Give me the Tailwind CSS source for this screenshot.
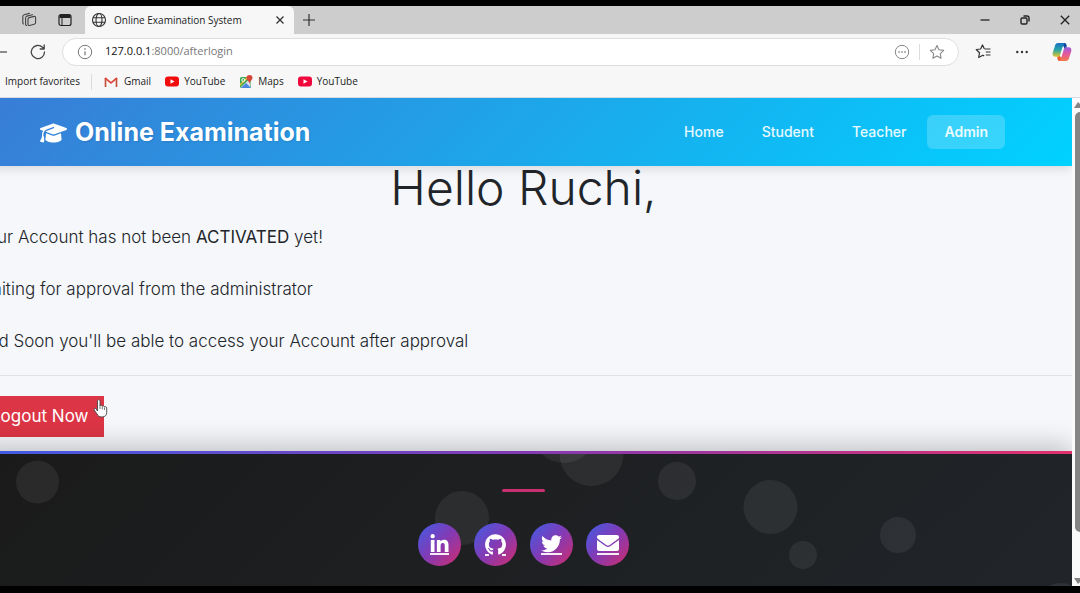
<!DOCTYPE html>
<html lang="en">
<head>
<meta charset="utf-8">
<meta name="viewport" content="width=device-width, initial-scale=1">
<title>Online Examination System</title>
<script src="https://cdn.jsdelivr.net/npm/@tailwindcss/browser@4"></script>
</head>
<body class="flex h-screen flex-col overflow-hidden bg-black pt-[6px] pb-[7px] font-['Inter',sans-serif]">

<!-- Browser window -->
<header class="shrink-0 bg-[#f7f7f7] font-['Open_Sans','Noto_Sans',sans-serif] text-[10px] text-[#222]">
  <!-- Tab strip -->
  <div class="flex h-7 items-stretch bg-[#cdcdcd]">
    <div class="flex w-[85px] items-center gap-5 pl-[21px]">
      <button type="button" aria-label="Workspaces">
        <svg class="size-4" viewBox="0 0 16 16" fill="none" stroke="#444" stroke-width="1.100" stroke-linejoin="round" stroke-linecap="round"><path d="M8.300 5.600l4.800-1.200c.9-.2 1.500.3 1.500 1.200v4.900c0 1-.5 1.600-1.400 1.800l-4.700 1.200c-.9.2-1.500-.3-1.500-1.200V7.400c0-1 .4-1.600 1.300-1.800z"/><path d="M4.600 12.300V6c0-1 .5-1.600 1.400-1.900l5.500-1.400M1.800 10.800V4.600c0-1 .5-1.600 1.400-1.900l5.200-1.300M4.600 12.300c0 .7.300 1.100.9 1.300M1.800 10.800c0 .6.300 1 .8 1.200"/></svg>
      </button>
      <button type="button" aria-label="Tab actions">
        <svg class="size-4" viewBox="0 0 16 16" fill="none" stroke="#222" stroke-width="1.200"><rect x="2" y="2.500" width="12" height="11" rx="2"/><path d="M2.500 4.500h11" stroke-width="3"/><path d="M5 5v8" stroke-width="1"/></svg>
      </button>
    </div>
    <div class="flex w-[209px] items-center rounded-t-md bg-[#f7f7f7] pr-2 pl-[6px]">
      <svg class="size-4" viewBox="0 0 16 16" fill="none" stroke="#333" stroke-width="1.100"><circle cx="8" cy="8" r="6.500"/><ellipse cx="8" cy="8" rx="3" ry="6.500"/><path d="M2 5.700h12M2 10.300h12"/></svg>
      <span class="ml-[7px] grow whitespace-nowrap">Online Examination System</span>
      <button type="button" aria-label="Close tab">
        <svg class="size-3" viewBox="0 0 12 12" stroke="#333" stroke-width="1.300"><path d="M2.500 2.500l7 7m0-7l-7 7"/></svg>
      </button>
    </div>
    <button type="button" aria-label="New tab" class="ml-2">
      <svg class="size-[14px]" viewBox="0 0 14 14" stroke="#333" stroke-width="1.200"><path d="M7 1v12M1 7h12"/></svg>
    </button>
    <div class="ml-auto flex items-center gap-[26px] pr-2">
      <button type="button" aria-label="Minimize"><svg class="size-[14px]" viewBox="0 0 14 14" stroke="#222" stroke-width="1.300"><path d="M2.500 7h9"/></svg></button>
      <button type="button" aria-label="Restore"><svg class="size-[14px]" viewBox="0 0 14 14" fill="none" stroke="#222" stroke-width="1.400"><rect x="3" y="5" width="6" height="6" rx="1.200"/><path d="M5.500 3h3.500a2 2 0 0 1 2 2v3.500"/></svg></button>
      <button type="button" aria-label="Close"><svg class="size-[14px]" viewBox="0 0 14 14" stroke="#222" stroke-width="1.300"><path d="M2.800 2.800l8.400 8.400m0-8.400l-8.400 8.400"/></svg></button>
    </div>
  </div>

  <!-- Address row -->
  <div class="flex h-[35px] items-center">
    <button type="button" aria-label="Back" class="w-7"><svg class="h-4 w-[7px]" viewBox="0 0 7 16" stroke="#444" stroke-width="1.200"><path d="M0 8h7"/></svg></button>
    <button type="button" aria-label="Refresh">
      <svg class="size-5" viewBox="0 0 20 20" fill="none" stroke="#444" stroke-width="1.300" stroke-linecap="round" stroke-linejoin="round"><path d="M16.500 10A6.600 6.600 0 1 1 14.500 5.300L16 6.800M16.200 3v4h-4"/></svg>
    </button>
    <div class="ml-[14px] flex h-[28px] grow items-center rounded-full border border-[#dedede] bg-white pr-[13px] pl-[14px]">
      <svg class="size-4" viewBox="0 0 16 16" fill="none" stroke="#777" stroke-width="1"><circle cx="8" cy="8" r="6.700"/><path d="M8 7.200v4" stroke-width="1.200"/><circle cx="8" cy="5" r=".4"/></svg>
      <span class="ml-3 grow text-[11px] text-[#777]"><span class="text-[#111]">127.0.0.1</span>:8000/afterlogin</span>
      <button type="button" aria-label="More page actions"><svg class="size-4" viewBox="0 0 16 16" fill="none" stroke="#888"><circle cx="8" cy="8" r="6.700"/><path d="M4.300 8h1.500m1.500 0h1.500m1.500 0h1.500" stroke-width="1.500"/></svg></button>
      <span class="mx-[9px] h-4 w-px bg-[#dcdcdc]"></span>
      <button type="button" aria-label="Add to favorites"><svg class="size-4" viewBox="0 0 16 16" fill="none" stroke="#888" stroke-width="1.100" stroke-linejoin="round"><path d="M8 1.500l2 4.300 4.700.6-3.400 3.200.8 4.700L8 12l-4.100 2.300.8-4.700L1.300 6.400 6 5.800z"/></svg></button>
    </div>
    <div class="ml-4 flex items-center gap-[22px] pr-2">
      <button type="button" aria-label="Favorites"><svg class="size-[17px]" viewBox="0 0 17 17" fill="none" stroke="#333" stroke-width="1.200" stroke-linejoin="round"><path d="M9.500 6h6M10.800 9h4.700M10.800 12h4.700M9.300 5.800L7.500 1.900 5.600 6 1.200 6.500l3.300 3.200-.8 4.800 4.100-2.300 1.400.7"/></svg></button>
      <button type="button" aria-label="Settings and more"><svg class="size-4" viewBox="0 0 16 16" fill="#333"><circle cx="3.300" cy="8" r="1.200"/><circle cx="8" cy="8" r="1.200"/><circle cx="12.700" cy="8" r="1.200"/></svg></button>
      <button type="button" aria-label="Copilot">
        <svg class="size-5" viewBox="0 0 20 20">
          <defs>
            <linearGradient id="cpA" x1="0" y1="0" x2="0" y2="1"><stop offset="0" stop-color="#1b6fc4"/><stop offset=".5" stop-color="#27a6a6"/><stop offset="1" stop-color="#e8c62c"/></linearGradient>
            <linearGradient id="cpB" x1="0" y1="0" x2="0" y2="1"><stop offset="0" stop-color="#9a5be0"/><stop offset=".5" stop-color="#e4589c"/><stop offset="1" stop-color="#f47a45"/></linearGradient>
          </defs>
          <path d="M12.300 1H6.300C4 1 3.200 2.600 2.600 5L.8 10.500C0 13 1.200 14.800 3.500 14.800h2.700c1 0 1.500-.6 1.800-1.600l2.300-7.500c.4-1.200 1-1.700 2-1.700h2.500L14 2c-.4-.7-.9-1-1.700-1z" fill="url(#cpA)"/>
          <path d="M7.700 19h6c2.300 0 3.100-1.600 3.700-4l1.800-5.500c.8-2.500-.4-4.300-2.700-4.300h-2.700c-1 0-1.500.6-1.800 1.600l-2.300 7.500c-.4 1.200-1 1.700-2 1.700H5.200L6 18c.4.700.9 1 1.700 1z" fill="url(#cpB)"/>
          <path d="M12.300 1c1.700 0 2 1.500 2.500 4.200-1.300 0-2 .4-2.500 1.600L11.500 4z" fill="#17479e"/>
          <path d="M7.700 19c-1.700 0-2-1.500-2.500-4.200 1.300 0 2-.3 2.600-1.300L9 16z" fill="#e9622e"/>
        </svg>
      </button>
    </div>
  </div>

  <!-- Favorites bar -->
  <nav class="flex h-[29px] items-center border-b border-[#d5dbe0] pb-[3px] pl-[5px]" aria-label="Favorites">
    <a href="#" class="w-[74px] whitespace-nowrap">Import favorites</a>
    <span class="mx-3 h-4 w-px bg-[#dcdcdc]"></span>
    <div class="flex items-center gap-[14px] whitespace-nowrap">
      <a href="#" class="flex items-center gap-[6px]"><svg class="h-3 w-[14px]" viewBox="0 0 14 12"><path d="M1.500 11V2" stroke="#c5523f" stroke-width="1.700"/><path d="M12.500 11V2" stroke="#c5523f" stroke-width="1.700"/><path d="M1 2l6 5 6-5" fill="none" stroke="#dd4b3e" stroke-width="1.700"/></svg>Gmail</a>
      <a href="#" class="flex items-center gap-[5px]"><svg class="h-[11px] w-[14px]" viewBox="0 0 14 11"><rect y=".5" width="14" height="10" rx="3" fill="#f20d0d"/><path d="M5.500 3.300v4.400l4-2.200z" fill="#fff"/></svg>YouTube</a>
      <a href="#" class="flex items-center gap-[5px]"><svg class="size-[14px]" viewBox="0 0 14 14"><rect x="1" y="2" width="11" height="11" rx="1.500" fill="#3aa757"/><path d="M1.500 12.500L11.500 3v9.500z" fill="#d9dde2"/><path d="M2 13l5-5 5 5z" fill="#4a86e0"/><path d="M1 11l9-9h-2L1 9z" fill="#f1c232"/><path d="M10.500 0a3 3 0 0 1 3 3c0 2-2.500 3-3 5.500-.5-2.500-3-3.500-3-5.500a3 3 0 0 1 3-3z" fill="#d9453a"/><circle cx="4.300" cy="5" r="1.500" fill="none" stroke="#fff"/></svg>Maps</a>
      <a href="#" class="flex items-center gap-[5px]"><svg class="h-[11px] w-[14px]" viewBox="0 0 14 11"><rect y=".5" width="14" height="10" rx="3" fill="#f0083c"/><path d="M5.500 3.300v4.400l4-2.200z" fill="#fff"/></svg>YouTube</a>
    </div>
  </nav>
</header>

<div class="flex min-h-0 grow bg-[#f5f7fb]">
  <div class="min-w-0 grow overflow-hidden">
    <!-- Page content is scrolled slightly to the right -->
    <div class="-ml-[25px] flex h-full flex-col">
      <nav class="z-10 flex h-[68px] shrink-0 items-center justify-between bg-linear-135/srgb from-[#3a7bd5] to-[#00d2ff] pr-[67px] pl-[65px] text-white shadow-[0_3px_10px_rgba(0,0,0,0.12)]">
        <a href="#" class="flex items-center gap-2 pt-px text-[25px] font-bold text-shadow-[1px_1px_2px_rgba(0,0,0,0.1)]">
          <svg class="h-[22px] w-[27px]" viewBox="0 0 640 512" fill="#fff"><path d="M320 32c-8.100 0-16.100 1.400-23.700 4.100L15.800 137.400C6.300 140.900 0 149.900 0 160s6.300 19.100 15.800 22.600l57.900 20.900C57.300 229.300 48 259.800 48 291.900v28.100c0 28.400-10.800 57.700-22.300 80.800c-6.500 13-13.900 25.800-22.500 37.600C0 442.700-.9 448.300 .9 453.400s6 8.900 11.200 10.200l64 16c4.200 1.100 8.700 .3 12.400-2s6.300-6.100 7.100-10.400c8.600-42.800 4.300-81.200-2.100-108.700C90.300 344.300 86 329.800 80 316.500V291.900c0-30.200 10.200-58.700 27.900-81.500c12.900-15.500 29.600-28 49.200-35.700l157-61.700c8.200-3.200 17.500 .8 20.700 9s-.8 17.500-9 20.700l-157 61.700c-12.400 4.900-23.300 12.400-32.200 21.600l159.600 57.600c7.600 2.700 15.600 4.100 23.700 4.100s16.100-1.400 23.700-4.100L624.200 182.600c9.500-3.400 15.800-12.500 15.800-22.600s-6.300-19.100-15.800-22.600L343.700 36.100C336.100 33.400 328.100 32 320 32zM128 408c0 35.300 86 72 192 72s192-36.700 192-72L496.700 262.600 354.500 314c-11.100 4-22.800 6-34.500 6s-23.500-2-34.500-6L143.300 262.600 128 408z"/></svg>
          Online Examination
        </a>
        <div class="flex items-center gap-1 text-sm font-medium text-white/90">
          <a href="#" class="rounded-md px-[17px] py-2">Home</a>
          <a href="#" class="rounded-md px-[17px] py-2">Student</a>
          <a href="#" class="rounded-md px-[17px] py-2">Teacher</a>
          <a href="#" class="rounded-md bg-white/20 px-[17px] py-[7px] font-semibold">Admin</a>
        </div>
      </nav>

      <main class="flex h-[285px] shrink-0 flex-col text-[#212529]">
        <h1 class="text-center text-5xl leading-[44px] font-light">Hello Ruchi,</h1>
        <div class="flex flex-col gap-6 pt-[13px] pl-[2px] text-[17px] leading-7 font-light">
          <p>Your Account has not been <span class="font-normal">ACTIVATED</span> yet!</p>
          <p>Waiting for approval from the administrator</p>
          <p>And Soon you'll be able to access your Account after approval</p>
        </div>
        <hr class="mt-5 border-[#dfe1e5]">
        <div class="relative mt-5 flex">
          <button type="button" class="h-[41px] bg-[#dc3545] px-4 text-[17px] text-white">Logout Now</button>
          <!-- Pointer over the button -->
          <svg class="absolute left-[118px] top-[2px] h-5 w-[15px]" viewBox="0 0 15 20"><path d="M4.500 13V3.200c0-2 2.500-2 2.500 0V8c.3-1 2.200-.9 2.300.4.500-.9 2.100-.7 2.200.6.600-.7 2.200-.4 2.200 1v4.500c0 2.500-1.500 4.500-4.700 4.500-3 0-4-1.300-5-3L1.200 12c-.7-1.400.8-2.300 1.800-1.200z" fill="#fff" stroke="#444" stroke-width=".9" stroke-linejoin="round"/><path d="M7 8v3M9.300 9v2.500M11.500 9.500V12" stroke="#555" stroke-width=".8"/></svg>
        </div>
      </main>

      <footer class="relative flex grow flex-col items-center bg-linear-135/srgb from-[#1a1a1a] to-[#212529] shadow-[0_-6px_24px_rgba(0,0,0,0.22)]">
        <div class="h-[3px] w-full shrink-0 bg-linear-to-r/srgb from-[#405de6] via-[#833ab4] to-[#e1306c]"></div>
        <!-- Floating bubbles -->
        <svg class="absolute inset-0 size-full" fill="#fff" fill-opacity=".065">
          <svg y="3" width="100%" height="100%">
            <circle cx="62.500" cy="28" r="21.500"/><circle cx="487" cy="64" r="27"/><circle cx="589" cy="-23" r="32"/><circle cx="616.500" cy="0" r="32"/><circle cx="702" cy="27" r="19"/><circle cx="795.500" cy="53" r="27"/><circle cx="828" cy="101" r="14"/><circle cx="923" cy="81" r="18"/><circle cx="1086" cy="154" r="25"/>
          </svg>
        </svg>
        <div class="mt-[35px] h-[3px] w-[43px] shrink-0 rounded-full bg-[#c9306f]"></div>
        <div class="relative mt-[31px] flex gap-[13px]">
          <a href="#" aria-label="LinkedIn" class="flex size-[43px] flex-col items-center justify-center gap-px rounded-full bg-linear-135/srgb from-[#405de6] via-[#833ab4] to-[#d12c6c]">
            <svg class="h-[18px] w-[19px]" viewBox="0 0 448 448" fill="#fff"><path d="M100.280 448H7.400V148.900h92.880zM53.790 108.100C24.090 108.100 0 83.500 0 53.800a53.790 53.790 0 0 1 107.580 0c0 29.700-24.100 54.300-53.790 54.300zM447.900 448h-92.680V302.400c0-34.700-.7-79.200-48.290-79.200-48.290 0-55.690 37.700-55.690 76.700V448h-92.780V148.900h89.080v40.800h1.300c12.400-23.500 42.690-48.300 87.880-48.300 94 0 111.280 61.900 111.280 142.300V448z"/></svg>
            <span class="h-[2px] w-[19px] bg-white/90"></span>
          </a>
          <a href="#" aria-label="GitHub" class="flex size-[43px] flex-col items-center justify-center rounded-full bg-linear-135/srgb from-[#405de6] via-[#833ab4] to-[#d12c6c]">
            <svg class="-mb-px h-[21px] w-[21px]" viewBox="0 0 496 500" fill="#fff"><path d="M244.800 8C106.100 8 0 113.300 0 252c0 110.900 69.800 205.800 169.500 239.200 12.800 2.300 17.300-5.600 17.300-12.100 0-6.200-.3-40.400-.3-61.400 0 0-70 15-84.700-29.800 0 0-11.400-29.100-27.800-36.600 0 0-22.900-15.700 1.600-15.400 0 0 24.900 2 38.600 25.800 21.900 38.600 58.600 27.500 72.900 20.900 2.300-16 8.800-27.100 16-33.700-55.900-6.200-112.300-14.300-112.300-110.500 0-27.500 7.600-41.300 23.600-58.900-2.600-6.500-11.100-33.300 2.600-67.900 20.900-6.500 69 27 69 27 20-5.600 41.500-8.500 62.800-8.500s42.800 2.900 62.800 8.500c0 0 48.100-33.600 69-27 13.700 34.700 5.200 61.400 2.600 67.900 16 17.700 25.800 31.500 25.800 58.900 0 96.500-58.900 104.200-114.800 110.500 9.200 7.900 17 22.900 17 46.400 0 33.700-.3 75.400-.3 83.600 0 6.500 4.600 14.400 17.300 12.100C428.200 457.800 496 362.900 496 252 496 113.300 383.500 8 244.800 8z"/></svg>
            <span class="flex w-[21px] justify-between"><span class="h-[2px] w-1 bg-white/90"></span><span class="h-[2px] w-1 bg-white/90"></span></span>
          </a>
          <a href="#" aria-label="Twitter" class="flex size-[43px] flex-col items-center justify-center rounded-full bg-linear-135/srgb from-[#405de6] via-[#833ab4] to-[#d12c6c]">
            <svg class="h-[19px] w-[21px]" viewBox="0 20 512 460" fill="#fff"><path d="M459.370 151.716c.325 4.548.325 9.097.325 13.645 0 138.720-105.583 298.558-298.558 298.558-59.452 0-114.680-17.219-161.137-47.106 8.447.974 16.568 1.299 25.340 1.299 49.055 0 94.213-16.568 130.274-44.832-46.132-.975-84.792-31.188-98.112-72.772 6.498.974 12.995 1.624 19.818 1.624 9.421 0 18.843-1.300 27.614-3.573-48.081-9.747-84.143-51.980-84.143-102.985v-1.299c13.969 7.797 30.214 12.670 47.431 13.319-28.264-18.843-46.781-51.005-46.781-87.391 0-19.492 5.197-37.360 14.294-52.954 51.655 63.675 129.300 105.258 216.365 109.807-1.624-7.797-2.599-15.918-2.599-24.040 0-57.828 46.782-104.934 104.934-104.934 30.213 0 57.502 12.670 76.670 33.137 23.715-4.548 46.456-13.320 66.599-25.340-7.798 24.366-24.366 44.833-46.132 57.827 21.117-2.273 41.584-8.122 60.426-16.243-14.292 20.791-32.161 39.308-52.628 54.253z"/></svg>
            <span class="h-[2px] w-[21px] bg-white/90"></span>
          </a>
          <a href="#" aria-label="Email" class="flex size-[43px] flex-col items-center justify-center gap-[2px] rounded-full bg-linear-135/srgb from-[#405de6] via-[#833ab4] to-[#d12c6c]">
            <svg class="h-[16px] w-[22px]" viewBox="0 64 512 384" preserveAspectRatio="none" fill="#fff"><path d="M502.300 190.800c3.900-3.100 9.700-.2 9.700 4.700V400c0 26.500-21.500 48-48 48H48c-26.500 0-48-21.500-48-48V195.600c0-5 5.700-7.800 9.700-4.700 22.400 17.400 52.100 39.500 154.100 113.600 21.100 15.400 56.700 47.800 92.200 47.600 35.700.3 72-32.800 92.300-47.600 102-74.100 131.600-96.300 154-113.700zM256 320c23.200.4 56.600-29.200 73.400-41.400 132.700-96.300 142.800-104.700 173.400-128.700 5.800-4.500 9.200-11.500 9.200-18.900v-19c0-26.500-21.500-48-48-48H48c-26.500 0-48 21.500-48 48v19c0 7.400 3.400 14.300 9.200 18.900 30.600 23.900 40.700 32.400 173.400 128.700 16.800 12.200 50.200 41.800 73.400 41.400z"/></svg>
            <span class="h-[2px] w-[22px] bg-white/90"></span>
          </a>
        </div>
      </footer>
    </div>
  </div>

  <!-- Page scrollbar -->
  <div class="flex w-2 shrink-0 flex-col items-end bg-[#fafafa]" aria-hidden="true">
    <svg class="mt-[3px] h-2 w-[6px]" viewBox="0 0 6 8" fill="#858585"><path d="M0 7l4-6 2 2v4z"/></svg>
    <div class="mt-[3px] h-[420px] w-[5px] rounded-l-full bg-[#858585]"></div>
    <svg class="mt-auto mb-px h-2 w-[6px]" viewBox="0 0 6 8" fill="#858585"><path d="M0 1l4 6 2-2V1z"/></svg>
  </div>
</div>
</body>
</html>
